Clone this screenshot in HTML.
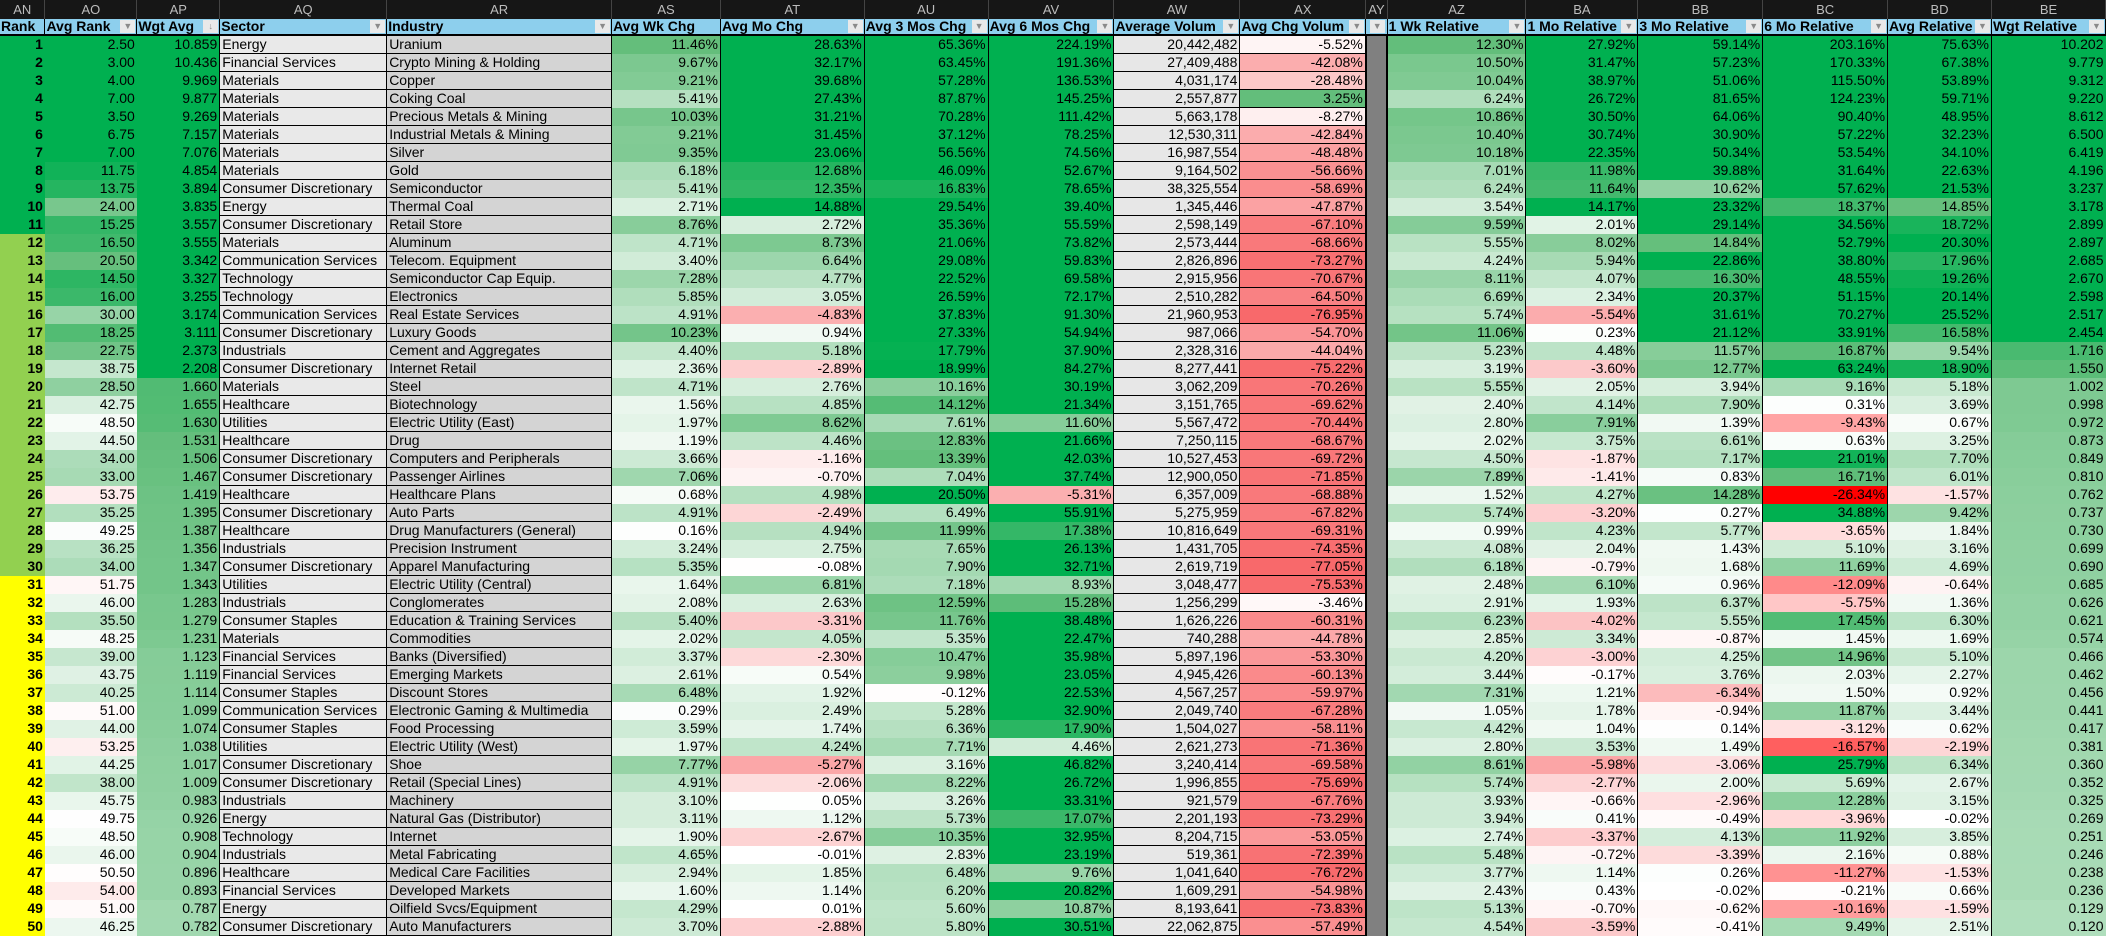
<!DOCTYPE html>
<html><head><meta charset="utf-8">
<style>
html,body{margin:0;padding:0;background:#000;width:2106px;height:936px;overflow:hidden}
table{border-collapse:collapse;table-layout:fixed;font-family:"Liberation Sans",Arial,sans-serif;font-size:14px;color:#000}
td{padding:0 2px;height:18px;line-height:17px;white-space:nowrap;overflow:hidden;text-align:right;box-sizing:border-box}
tr.L td{height:19px;background:#161616;color:#bdbdbd;text-align:center;font-size:13px;border-right:1px solid #444}
tr.H td{height:16px;line-height:15px;background:#8dcfed;font-weight:bold;text-align:left;border-bottom:2px solid #000;border-right:1px solid #000;position:relative;padding-left:1px}
tr.H td .b{position:absolute;right:1px;top:1px;width:15px;height:13px;background:#e9e9e9;color:#8a8a8a;font-size:9px;line-height:13px;text-align:center;font-weight:normal}
tbody td:nth-child(1){font-weight:bold}
tbody td:nth-child(4){text-align:left;background:#e9e9e9;border:1px solid #000}
tbody td:nth-child(5){text-align:left;background:#d4d4d4;border:1px solid #000}
tbody td:nth-child(10){background:#e7e7e7;border:1px solid #000}
tbody td:nth-child(11){border:1px solid #000}
tbody td:nth-child(12){background:#808080;border-left:2px solid #000;border-right:2px solid #000;padding:0}
tbody td:nth-child(7),tbody td:nth-child(8),tbody td:nth-child(9),tbody td:nth-child(14),tbody td:nth-child(15),tbody td:nth-child(16),tbody td:nth-child(17){border-left:1px solid #000;border-right:1px solid #000}
</style></head><body>
<table id="t">
<colgroup><col style="width:45px"><col style="width:92px"><col style="width:83px"><col style="width:167px"><col style="width:225px"><col style="width:109px"><col style="width:144px"><col style="width:124px"><col style="width:126px"><col style="width:126px"><col style="width:126px"><col style="width:20px"><col style="width:139px"><col style="width:112px"><col style="width:125px"><col style="width:125px"><col style="width:104px"><col style="width:114px"></colgroup>
<thead>
<tr class="L"><td>AN</td><td>AO</td><td>AP</td><td>AQ</td><td>AR</td><td>AS</td><td>AT</td><td>AU</td><td>AV</td><td>AW</td><td>AX</td><td>AY</td><td>AZ</td><td>BA</td><td>BB</td><td>BC</td><td>BD</td><td>BE</td></tr>
<tr class="H"><td>Rank</td><td>Avg Rank<span class="b">▼</span></td><td>Wgt Avg<span class="b">↓</span></td><td>Sector<span class="b">▼</span></td><td>Industry<span class="b">▼</span></td><td>Avg Wk Chg</td><td>Avg Mo Chg<span class="b">▼</span></td><td>Avg 3 Mos Chg<span class="b">▼</span></td><td>Avg 6 Mos Chg<span class="b">▼</span></td><td>Average Volum<span class="b">▼</span></td><td>Avg Chg Volum<span class="b">▼</span></td><td style="padding:0"><span class="b" style="right:2px">▼</span></td><td>1 Wk Relative<span class="b">▼</span></td><td>1 Mo Relative<span class="b">▼</span></td><td>3 Mo Relative<span class="b">▼</span></td><td>6 Mo Relative<span class="b">▼</span></td><td>Avg Relative<span class="b">▼</span></td><td>Wgt Relative<span class="b">▼</span></td></tr>
</thead>
<tbody>
<tr><td>1<td>2.50<td>10.859<td>Energy<td>Uranium<td>11.46%<td>28.63%<td>65.36%<td>224.19%<td>20,442,482<td>-5.52%<td><td>12.30%<td>27.92%<td>59.14%<td>203.16%<td>75.63%<td>10.202</tr>
<tr><td>2<td>3.00<td>10.436<td>Financial Services<td>Crypto Mining &amp; Holding<td>9.67%<td>32.17%<td>63.45%<td>191.36%<td>27,409,488<td>-42.08%<td><td>10.50%<td>31.47%<td>57.23%<td>170.33%<td>67.38%<td>9.779</tr>
<tr><td>3<td>4.00<td>9.969<td>Materials<td>Copper<td>9.21%<td>39.68%<td>57.28%<td>136.53%<td>4,031,174<td>-28.48%<td><td>10.04%<td>38.97%<td>51.06%<td>115.50%<td>53.89%<td>9.312</tr>
<tr><td>4<td>7.00<td>9.877<td>Materials<td>Coking Coal<td>5.41%<td>27.43%<td>87.87%<td>145.25%<td>2,557,877<td>3.25%<td><td>6.24%<td>26.72%<td>81.65%<td>124.23%<td>59.71%<td>9.220</tr>
<tr><td>5<td>3.50<td>9.269<td>Materials<td>Precious Metals &amp; Mining<td>10.03%<td>31.21%<td>70.28%<td>111.42%<td>5,663,178<td>-8.27%<td><td>10.86%<td>30.50%<td>64.06%<td>90.40%<td>48.95%<td>8.612</tr>
<tr><td>6<td>6.75<td>7.157<td>Materials<td>Industrial Metals &amp; Mining<td>9.21%<td>31.45%<td>37.12%<td>78.25%<td>12,530,311<td>-42.84%<td><td>10.40%<td>30.74%<td>30.90%<td>57.22%<td>32.23%<td>6.500</tr>
<tr><td>7<td>7.00<td>7.076<td>Materials<td>Silver<td>9.35%<td>23.06%<td>56.56%<td>74.56%<td>16,987,554<td>-48.48%<td><td>10.18%<td>22.35%<td>50.34%<td>53.54%<td>34.10%<td>6.419</tr>
<tr><td>8<td>11.75<td>4.854<td>Materials<td>Gold<td>6.18%<td>12.68%<td>46.09%<td>52.67%<td>9,164,502<td>-56.66%<td><td>7.01%<td>11.98%<td>39.88%<td>31.64%<td>22.63%<td>4.196</tr>
<tr><td>9<td>13.75<td>3.894<td>Consumer Discretionary<td>Semiconductor<td>5.41%<td>12.35%<td>16.83%<td>78.65%<td>38,325,554<td>-58.69%<td><td>6.24%<td>11.64%<td>10.62%<td>57.62%<td>21.53%<td>3.237</tr>
<tr><td>10<td>24.00<td>3.835<td>Energy<td>Thermal Coal<td>2.71%<td>14.88%<td>29.54%<td>39.40%<td>1,345,446<td>-47.87%<td><td>3.54%<td>14.17%<td>23.32%<td>18.37%<td>14.85%<td>3.178</tr>
<tr><td>11<td>15.25<td>3.557<td>Consumer Discretionary<td>Retail Store<td>8.76%<td>2.72%<td>35.36%<td>55.59%<td>2,598,149<td>-67.10%<td><td>9.59%<td>2.01%<td>29.14%<td>34.56%<td>18.72%<td>2.899</tr>
<tr><td>12<td>16.50<td>3.555<td>Materials<td>Aluminum<td>4.71%<td>8.73%<td>21.06%<td>73.82%<td>2,573,444<td>-68.66%<td><td>5.55%<td>8.02%<td>14.84%<td>52.79%<td>20.30%<td>2.897</tr>
<tr><td>13<td>20.50<td>3.342<td>Communication Services<td>Telecom. Equipment<td>3.40%<td>6.64%<td>29.08%<td>59.83%<td>2,826,896<td>-73.27%<td><td>4.24%<td>5.94%<td>22.86%<td>38.80%<td>17.96%<td>2.685</tr>
<tr><td>14<td>14.50<td>3.327<td>Technology<td>Semiconductor Cap Equip.<td>7.28%<td>4.77%<td>22.52%<td>69.58%<td>2,915,956<td>-70.67%<td><td>8.11%<td>4.07%<td>16.30%<td>48.55%<td>19.26%<td>2.670</tr>
<tr><td>15<td>16.00<td>3.255<td>Technology<td>Electronics<td>5.85%<td>3.05%<td>26.59%<td>72.17%<td>2,510,282<td>-64.50%<td><td>6.69%<td>2.34%<td>20.37%<td>51.15%<td>20.14%<td>2.598</tr>
<tr><td>16<td>30.00<td>3.174<td>Communication Services<td>Real Estate Services<td>4.91%<td>-4.83%<td>37.83%<td>91.30%<td>21,960,953<td>-76.95%<td><td>5.74%<td>-5.54%<td>31.61%<td>70.27%<td>25.52%<td>2.517</tr>
<tr><td>17<td>18.25<td>3.111<td>Consumer Discretionary<td>Luxury Goods<td>10.23%<td>0.94%<td>27.33%<td>54.94%<td>987,066<td>-54.70%<td><td>11.06%<td>0.23%<td>21.12%<td>33.91%<td>16.58%<td>2.454</tr>
<tr><td>18<td>22.75<td>2.373<td>Industrials<td>Cement and Aggregates<td>4.40%<td>5.18%<td>17.79%<td>37.90%<td>2,328,316<td>-44.04%<td><td>5.23%<td>4.48%<td>11.57%<td>16.87%<td>9.54%<td>1.716</tr>
<tr><td>19<td>38.75<td>2.208<td>Consumer Discretionary<td>Internet Retail<td>2.36%<td>-2.89%<td>18.99%<td>84.27%<td>8,277,441<td>-75.22%<td><td>3.19%<td>-3.60%<td>12.77%<td>63.24%<td>18.90%<td>1.550</tr>
<tr><td>20<td>28.50<td>1.660<td>Materials<td>Steel<td>4.71%<td>2.76%<td>10.16%<td>30.19%<td>3,062,209<td>-70.26%<td><td>5.55%<td>2.05%<td>3.94%<td>9.16%<td>5.18%<td>1.002</tr>
<tr><td>21<td>42.75<td>1.655<td>Healthcare<td>Biotechnology<td>1.56%<td>4.85%<td>14.12%<td>21.34%<td>3,151,765<td>-69.62%<td><td>2.40%<td>4.14%<td>7.90%<td>0.31%<td>3.69%<td>0.998</tr>
<tr><td>22<td>48.50<td>1.630<td>Utilities<td>Electric Utility (East)<td>1.97%<td>8.62%<td>7.61%<td>11.60%<td>5,567,472<td>-70.44%<td><td>2.80%<td>7.91%<td>1.39%<td>-9.43%<td>0.67%<td>0.972</tr>
<tr><td>23<td>44.50<td>1.531<td>Healthcare<td>Drug<td>1.19%<td>4.46%<td>12.83%<td>21.66%<td>7,250,115<td>-68.67%<td><td>2.02%<td>3.75%<td>6.61%<td>0.63%<td>3.25%<td>0.873</tr>
<tr><td>24<td>34.00<td>1.506<td>Consumer Discretionary<td>Computers and Peripherals<td>3.66%<td>-1.16%<td>13.39%<td>42.03%<td>10,527,453<td>-69.72%<td><td>4.50%<td>-1.87%<td>7.17%<td>21.01%<td>7.70%<td>0.849</tr>
<tr><td>25<td>33.00<td>1.467<td>Consumer Discretionary<td>Passenger Airlines<td>7.06%<td>-0.70%<td>7.04%<td>37.74%<td>12,900,050<td>-71.85%<td><td>7.89%<td>-1.41%<td>0.83%<td>16.71%<td>6.01%<td>0.810</tr>
<tr><td>26<td>53.75<td>1.419<td>Healthcare<td>Healthcare Plans<td>0.68%<td>4.98%<td>20.50%<td>-5.31%<td>6,357,009<td>-68.88%<td><td>1.52%<td>4.27%<td>14.28%<td>-26.34%<td>-1.57%<td>0.762</tr>
<tr><td>27<td>35.25<td>1.395<td>Consumer Discretionary<td>Auto Parts<td>4.91%<td>-2.49%<td>6.49%<td>55.91%<td>5,275,959<td>-67.82%<td><td>5.74%<td>-3.20%<td>0.27%<td>34.88%<td>9.42%<td>0.737</tr>
<tr><td>28<td>49.25<td>1.387<td>Healthcare<td>Drug Manufacturers (General)<td>0.16%<td>4.94%<td>11.99%<td>17.38%<td>10,816,649<td>-69.31%<td><td>0.99%<td>4.23%<td>5.77%<td>-3.65%<td>1.84%<td>0.730</tr>
<tr><td>29<td>36.25<td>1.356<td>Industrials<td>Precision Instrument<td>3.24%<td>2.75%<td>7.65%<td>26.13%<td>1,431,705<td>-74.35%<td><td>4.08%<td>2.04%<td>1.43%<td>5.10%<td>3.16%<td>0.699</tr>
<tr><td>30<td>34.00<td>1.347<td>Consumer Discretionary<td>Apparel Manufacturing<td>5.35%<td>-0.08%<td>7.90%<td>32.71%<td>2,619,719<td>-77.05%<td><td>6.18%<td>-0.79%<td>1.68%<td>11.69%<td>4.69%<td>0.690</tr>
<tr><td>31<td>51.75<td>1.343<td>Utilities<td>Electric Utility (Central)<td>1.64%<td>6.81%<td>7.18%<td>8.93%<td>3,048,477<td>-75.53%<td><td>2.48%<td>6.10%<td>0.96%<td>-12.09%<td>-0.64%<td>0.685</tr>
<tr><td>32<td>46.00<td>1.283<td>Industrials<td>Conglomerates<td>2.08%<td>2.63%<td>12.59%<td>15.28%<td>1,256,299<td>-3.46%<td><td>2.91%<td>1.93%<td>6.37%<td>-5.75%<td>1.36%<td>0.626</tr>
<tr><td>33<td>35.50<td>1.279<td>Consumer Staples<td>Education &amp; Training Services<td>5.40%<td>-3.31%<td>11.76%<td>38.48%<td>1,626,226<td>-60.31%<td><td>6.23%<td>-4.02%<td>5.55%<td>17.45%<td>6.30%<td>0.621</tr>
<tr><td>34<td>48.25<td>1.231<td>Materials<td>Commodities<td>2.02%<td>4.05%<td>5.35%<td>22.47%<td>740,288<td>-44.78%<td><td>2.85%<td>3.34%<td>-0.87%<td>1.45%<td>1.69%<td>0.574</tr>
<tr><td>35<td>39.00<td>1.123<td>Financial Services<td>Banks (Diversified)<td>3.37%<td>-2.30%<td>10.47%<td>35.98%<td>5,897,196<td>-53.30%<td><td>4.20%<td>-3.00%<td>4.25%<td>14.96%<td>5.10%<td>0.466</tr>
<tr><td>36<td>43.75<td>1.119<td>Financial Services<td>Emerging Markets<td>2.61%<td>0.54%<td>9.98%<td>23.05%<td>4,945,426<td>-60.13%<td><td>3.44%<td>-0.17%<td>3.76%<td>2.03%<td>2.27%<td>0.462</tr>
<tr><td>37<td>40.25<td>1.114<td>Consumer Staples<td>Discount Stores<td>6.48%<td>1.92%<td>-0.12%<td>22.53%<td>4,567,257<td>-59.97%<td><td>7.31%<td>1.21%<td>-6.34%<td>1.50%<td>0.92%<td>0.456</tr>
<tr><td>38<td>51.00<td>1.099<td>Communication Services<td>Electronic Gaming &amp; Multimedia<td>0.29%<td>2.49%<td>5.28%<td>32.90%<td>2,049,740<td>-67.28%<td><td>1.05%<td>1.78%<td>-0.94%<td>11.87%<td>3.44%<td>0.441</tr>
<tr><td>39<td>44.00<td>1.074<td>Consumer Staples<td>Food Processing<td>3.59%<td>1.74%<td>6.36%<td>17.90%<td>1,504,027<td>-58.11%<td><td>4.42%<td>1.04%<td>0.14%<td>-3.12%<td>0.62%<td>0.417</tr>
<tr><td>40<td>53.25<td>1.038<td>Utilities<td>Electric Utility (West)<td>1.97%<td>4.24%<td>7.71%<td>4.46%<td>2,621,273<td>-71.36%<td><td>2.80%<td>3.53%<td>1.49%<td>-16.57%<td>-2.19%<td>0.381</tr>
<tr><td>41<td>44.25<td>1.017<td>Consumer Discretionary<td>Shoe<td>7.77%<td>-5.27%<td>3.16%<td>46.82%<td>3,240,414<td>-69.58%<td><td>8.61%<td>-5.98%<td>-3.06%<td>25.79%<td>6.34%<td>0.360</tr>
<tr><td>42<td>38.00<td>1.009<td>Consumer Discretionary<td>Retail (Special Lines)<td>4.91%<td>-2.06%<td>8.22%<td>26.72%<td>1,996,855<td>-75.69%<td><td>5.74%<td>-2.77%<td>2.00%<td>5.69%<td>2.67%<td>0.352</tr>
<tr><td>43<td>45.75<td>0.983<td>Industrials<td>Machinery<td>3.10%<td>0.05%<td>3.26%<td>33.31%<td>921,579<td>-67.76%<td><td>3.93%<td>-0.66%<td>-2.96%<td>12.28%<td>3.15%<td>0.325</tr>
<tr><td>44<td>49.75<td>0.926<td>Energy<td>Natural Gas (Distributor)<td>3.11%<td>1.12%<td>5.73%<td>17.07%<td>2,201,193<td>-73.29%<td><td>3.94%<td>0.41%<td>-0.49%<td>-3.96%<td>-0.02%<td>0.269</tr>
<tr><td>45<td>48.50<td>0.908<td>Technology<td>Internet<td>1.90%<td>-2.67%<td>10.35%<td>32.95%<td>8,204,715<td>-53.05%<td><td>2.74%<td>-3.37%<td>4.13%<td>11.92%<td>3.85%<td>0.251</tr>
<tr><td>46<td>46.00<td>0.904<td>Industrials<td>Metal Fabricating<td>4.65%<td>-0.01%<td>2.83%<td>23.19%<td>519,361<td>-72.39%<td><td>5.48%<td>-0.72%<td>-3.39%<td>2.16%<td>0.88%<td>0.246</tr>
<tr><td>47<td>50.50<td>0.896<td>Healthcare<td>Medical Care Facilities<td>2.94%<td>1.85%<td>6.48%<td>9.76%<td>1,041,640<td>-76.72%<td><td>3.77%<td>1.14%<td>0.26%<td>-11.27%<td>-1.53%<td>0.238</tr>
<tr><td>48<td>54.00<td>0.893<td>Financial Services<td>Developed Markets<td>1.60%<td>1.14%<td>6.20%<td>20.82%<td>1,609,291<td>-54.98%<td><td>2.43%<td>0.43%<td>-0.02%<td>-0.21%<td>0.66%<td>0.236</tr>
<tr><td>49<td>51.00<td>0.787<td>Energy<td>Oilfield Svcs/Equipment<td>4.29%<td>0.01%<td>5.60%<td>10.87%<td>8,193,641<td>-73.83%<td><td>5.13%<td>-0.70%<td>-0.62%<td>-10.16%<td>-1.59%<td>0.129</tr>
<tr><td>50<td>46.25<td>0.782<td>Consumer Discretionary<td>Auto Manufacturers<td>3.70%<td>-2.88%<td>5.80%<td>30.51%<td>22,062,875<td>-57.49%<td><td>4.54%<td>-3.59%<td>-0.41%<td>9.49%<td>2.51%<td>0.120</tr>
</tbody></table>
<script>
(function(){
function cl(t){return t<0?0:t>1?1:t}
function mix(a,b,t){return 'rgb('+a.map(function(x,i){return Math.round(x+(b[i]-x)*t)}).join(',')+')'}
var W=[255,255,255],M=[99,190,123],S=[0,176,80],R=[248,105,107],RR=[255,0,0];
function g(t){t=cl(t);return t<0.75?mix(W,M,t/0.75):mix(M,S,(t-0.75)/0.25)}
function gl(t){return mix(W,M,cl(t))}
function r(t,c){return mix(W,c||R,cl(t))}
function pn(cap,neg,nc){return function(v){return v>=0?g(v/cap):r(-v/neg,nc)}}
var F={
1:function(v){return v<=50?g((50-v)/40):r((v-50)/30)},
2:function(v){return g(0.45+0.55*(v-0.78)/1.4)},
5:function(v){return gl(v/11.5)},
6:pn(14,9),7:pn(18,9),8:pn(20,10),
10:function(v){return v>=0?'rgb(99,190,123)':r(-v/77)},
12:function(v){return gl(v/12.3)},
13:pn(14,10),14:pn(20,14),15:pn(22,26.34,RR),16:pn(20,8),
17:function(v){return g(0.35+0.65*v/2.4)}
};
var rows=document.querySelectorAll('#t tbody tr');
for(var i=0;i<rows.length;i++){
 var c=rows[i].children;
 c[0].style.background=i<11?'#00b050':i<30?'#92d050':'#ffff00';
 for(var k in F){if(!c[k])continue;var v=parseFloat(c[k].textContent.replace(/,/g,''));if(!isNaN(v))c[k].style.background=F[k](v);}
}
})();
</script>
</body></html>
